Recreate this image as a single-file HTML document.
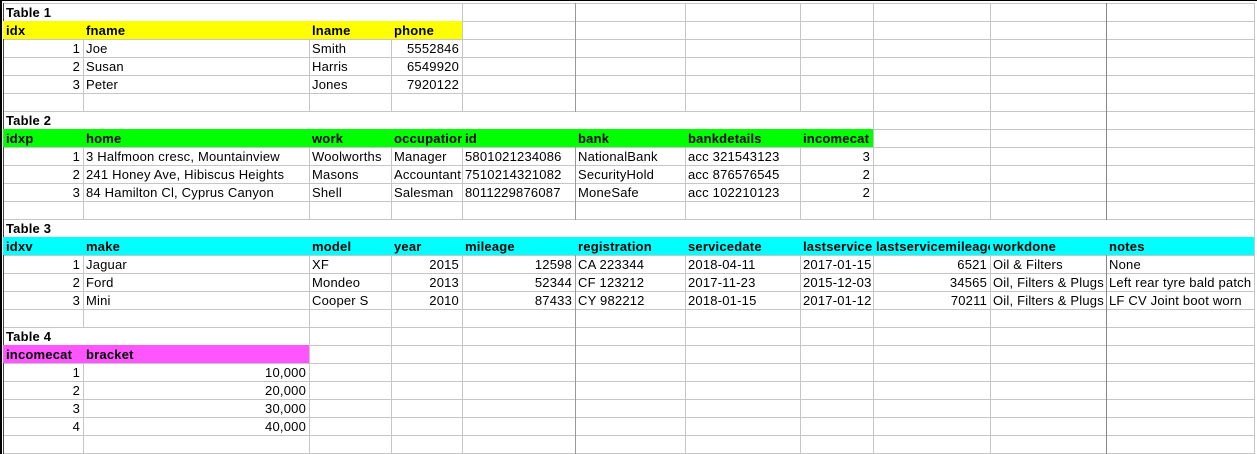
<!DOCTYPE html><html><head><style>
body{margin:0;width:1257px;height:454px;overflow:hidden;background:#fff;position:relative;font-family:"Liberation Sans",Arial,sans-serif;font-size:13px;color:#000}
.h{position:absolute;left:3px;width:1251px;height:1px;background:#c6c6c6}
.v{position:absolute;top:3px;height:451px;width:1px;background:#c6c6c6}
.r{position:absolute}
.t{position:absolute;height:18px;line-height:19px;white-space:nowrap;overflow:hidden;padding:0 3px;box-sizing:border-box;letter-spacing:0.2px}
.n{text-align:right}
.b{font-weight:bold}
</style></head><body>
<div class="h" style="top:3px"></div><div class="h" style="top:21px"></div><div class="h" style="top:39px"></div><div class="h" style="top:57px"></div><div class="h" style="top:75px"></div><div class="h" style="top:93px"></div><div class="h" style="top:111px"></div><div class="h" style="top:129px"></div><div class="h" style="top:147px"></div><div class="h" style="top:165px"></div><div class="h" style="top:183px"></div><div class="h" style="top:201px"></div><div class="h" style="top:219px"></div><div class="h" style="top:237px"></div><div class="h" style="top:255px"></div><div class="h" style="top:273px"></div><div class="h" style="top:291px"></div><div class="h" style="top:309px"></div><div class="h" style="top:327px"></div><div class="h" style="top:345px"></div><div class="h" style="top:363px"></div><div class="h" style="top:381px"></div><div class="h" style="top:399px"></div><div class="h" style="top:417px"></div><div class="h" style="top:435px"></div><div class="h" style="top:453px"></div>
<div class="v" style="left:3px;background:#444"></div><div class="v" style="left:83px"></div><div class="v" style="left:309px"></div><div class="v" style="left:391px"></div><div class="v" style="left:462px"></div><div class="v" style="left:575px;background:#999"></div><div class="v" style="left:685px"></div><div class="v" style="left:800px"></div><div class="v" style="left:873px"></div><div class="v" style="left:990px"></div><div class="v" style="left:1106px;background:#888"></div><div class="v" style="left:1254px"></div>
<div class="r" style="left:0;top:0;width:2px;height:454px;background:#000"></div>
<div class="r" style="left:0;top:0;width:1257px;height:1px;background:#000"></div>
<div class="r" style="left:4px;top:4px;width:458px;height:17px;background:#fff"></div>
<div class="r" style="left:4px;top:112px;width:869px;height:17px;background:#fff"></div>
<div class="r" style="left:4px;top:220px;width:1250px;height:17px;background:#fff"></div>
<div class="r" style="left:4px;top:328px;width:305px;height:17px;background:#fff"></div>
<div class="r" style="left:3px;top:21px;width:459px;height:18px;background:#ffff00"></div>
<div class="r" style="left:3px;top:129px;width:870px;height:18px;background:#00ff00"></div>
<div class="r" style="left:3px;top:237px;width:1251px;height:18px;background:#00ffff"></div>
<div class="r" style="left:3px;top:345px;width:306px;height:18px;background:#ff55ff"></div>

<div class="t b" style="left:3px;top:3px;width:200px">Table 1</div>
<div class="t b" style="left:3px;top:21px;width:80px">idx</div><div class="t b" style="left:83px;top:21px;width:226px">fname</div><div class="t b" style="left:309px;top:21px;width:82px">lname</div><div class="t b" style="left:391px;top:21px;width:71px">phone</div>
<div class="t n" style="left:3px;top:39px;width:80px">1</div><div class="t" style="left:83px;top:39px;width:226px">Joe</div><div class="t" style="left:309px;top:39px;width:82px">Smith</div><div class="t n" style="left:391px;top:39px;width:71px">5552846</div>
<div class="t n" style="left:3px;top:57px;width:80px">2</div><div class="t" style="left:83px;top:57px;width:226px">Susan</div><div class="t" style="left:309px;top:57px;width:82px">Harris</div><div class="t n" style="left:391px;top:57px;width:71px">6549920</div>
<div class="t n" style="left:3px;top:75px;width:80px">3</div><div class="t" style="left:83px;top:75px;width:226px">Peter</div><div class="t" style="left:309px;top:75px;width:82px">Jones</div><div class="t n" style="left:391px;top:75px;width:71px">7920122</div>

<div class="t b" style="left:3px;top:111px;width:200px">Table 2</div>
<div class="t b" style="left:3px;top:129px;width:80px">idxp</div><div class="t b" style="left:83px;top:129px;width:226px">home</div><div class="t b" style="left:309px;top:129px;width:82px">work</div><div class="t b" style="left:391px;top:129px;width:71px">occupation</div><div class="t b" style="left:462px;top:129px;width:113px">id</div><div class="t b" style="left:575px;top:129px;width:110px">bank</div><div class="t b" style="left:685px;top:129px;width:115px">bankdetails</div><div class="t b" style="left:800px;top:129px;width:73px">incomecat</div>
<div class="t n" style="left:3px;top:147px;width:80px">1</div><div class="t" style="left:83px;top:147px;width:226px">3 Halfmoon cresc, Mountainview</div><div class="t" style="left:309px;top:147px;width:82px">Woolworths</div><div class="t" style="left:391px;top:147px;width:71px">Manager</div><div class="t" style="left:462px;top:147px;width:113px">5801021234086</div><div class="t" style="left:575px;top:147px;width:110px">NationalBank</div><div class="t" style="left:685px;top:147px;width:115px">acc 321543123</div><div class="t n" style="left:800px;top:147px;width:73px">3</div>
<div class="t n" style="left:3px;top:165px;width:80px">2</div><div class="t" style="left:83px;top:165px;width:226px">241 Honey Ave, Hibiscus Heights</div><div class="t" style="left:309px;top:165px;width:82px">Masons</div><div class="t" style="left:391px;top:165px;width:71px">Accountant</div><div class="t" style="left:462px;top:165px;width:113px">7510214321082</div><div class="t" style="left:575px;top:165px;width:110px">SecurityHold</div><div class="t" style="left:685px;top:165px;width:115px">acc 876576545</div><div class="t n" style="left:800px;top:165px;width:73px">2</div>
<div class="t n" style="left:3px;top:183px;width:80px">3</div><div class="t" style="left:83px;top:183px;width:226px">84 Hamilton Cl, Cyprus Canyon</div><div class="t" style="left:309px;top:183px;width:82px">Shell</div><div class="t" style="left:391px;top:183px;width:71px">Salesman</div><div class="t" style="left:462px;top:183px;width:113px">8011229876087</div><div class="t" style="left:575px;top:183px;width:110px">MoneSafe</div><div class="t" style="left:685px;top:183px;width:115px">acc 102210123</div><div class="t n" style="left:800px;top:183px;width:73px">2</div>

<div class="t b" style="left:3px;top:219px;width:200px">Table 3</div>
<div class="t b" style="left:3px;top:237px;width:80px">idxv</div><div class="t b" style="left:83px;top:237px;width:226px">make</div><div class="t b" style="left:309px;top:237px;width:82px">model</div><div class="t b" style="left:391px;top:237px;width:71px">year</div><div class="t b" style="left:462px;top:237px;width:113px">mileage</div><div class="t b" style="left:575px;top:237px;width:110px">registration</div><div class="t b" style="left:685px;top:237px;width:115px">servicedate</div><div class="t b" style="left:800px;top:237px;width:73px">lastservice</div><div class="t b" style="left:873px;top:237px;width:117px">lastservicemileage</div><div class="t b" style="left:990px;top:237px;width:116px">workdone</div><div class="t b" style="left:1106px;top:237px;width:148px">notes</div>
<div class="t n" style="left:3px;top:255px;width:80px">1</div><div class="t" style="left:83px;top:255px;width:226px">Jaguar</div><div class="t" style="left:309px;top:255px;width:82px">XF</div><div class="t n" style="left:391px;top:255px;width:71px">2015</div><div class="t n" style="left:462px;top:255px;width:113px">12598</div><div class="t" style="left:575px;top:255px;width:110px">CA 223344</div><div class="t" style="left:685px;top:255px;width:115px">2018-04-11</div><div class="t" style="left:800px;top:255px;width:73px">2017-01-15</div><div class="t n" style="left:873px;top:255px;width:117px">6521</div><div class="t" style="left:990px;top:255px;width:116px">Oil &amp; Filters</div><div class="t" style="left:1106px;top:255px;width:148px">None</div>
<div class="t n" style="left:3px;top:273px;width:80px">2</div><div class="t" style="left:83px;top:273px;width:226px">Ford</div><div class="t" style="left:309px;top:273px;width:82px">Mondeo</div><div class="t n" style="left:391px;top:273px;width:71px">2013</div><div class="t n" style="left:462px;top:273px;width:113px">52344</div><div class="t" style="left:575px;top:273px;width:110px">CF 123212</div><div class="t" style="left:685px;top:273px;width:115px">2017-11-23</div><div class="t" style="left:800px;top:273px;width:73px">2015-12-03</div><div class="t n" style="left:873px;top:273px;width:117px">34565</div><div class="t" style="left:990px;top:273px;width:116px">Oil, Filters &amp; Plugs</div><div class="t" style="left:1106px;top:273px;width:148px">Left rear tyre bald patch</div>
<div class="t n" style="left:3px;top:291px;width:80px">3</div><div class="t" style="left:83px;top:291px;width:226px">Mini</div><div class="t" style="left:309px;top:291px;width:82px">Cooper S</div><div class="t n" style="left:391px;top:291px;width:71px">2010</div><div class="t n" style="left:462px;top:291px;width:113px">87433</div><div class="t" style="left:575px;top:291px;width:110px">CY 982212</div><div class="t" style="left:685px;top:291px;width:115px">2018-01-15</div><div class="t" style="left:800px;top:291px;width:73px">2017-01-12</div><div class="t n" style="left:873px;top:291px;width:117px">70211</div><div class="t" style="left:990px;top:291px;width:116px">Oil, Filters &amp; Plugs</div><div class="t" style="left:1106px;top:291px;width:148px">LF CV Joint boot worn</div>

<div class="t b" style="left:3px;top:327px;width:200px">Table 4</div>
<div class="t b" style="left:3px;top:345px;width:80px">incomecat</div><div class="t b" style="left:83px;top:345px;width:226px">bracket</div>
<div class="t n" style="left:3px;top:363px;width:80px">1</div><div class="t n" style="left:83px;top:363px;width:226px">10,000</div>
<div class="t n" style="left:3px;top:381px;width:80px">2</div><div class="t n" style="left:83px;top:381px;width:226px">20,000</div>
<div class="t n" style="left:3px;top:399px;width:80px">3</div><div class="t n" style="left:83px;top:399px;width:226px">30,000</div>
<div class="t n" style="left:3px;top:417px;width:80px">4</div><div class="t n" style="left:83px;top:417px;width:226px">40,000</div>
</body></html>
